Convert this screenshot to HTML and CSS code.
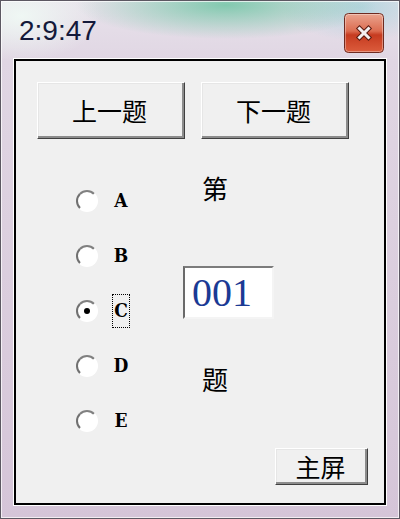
FILE: index.html
```html
<!DOCTYPE html>
<html>
<head>
<meta charset="utf-8">
<link rel="stylesheet" href="styles.css">
</head>
<body>
<div class="window">
  <div class="titlebar">
    <div class="title">2:9:47</div>
    <div class="close">
      <svg width="40" height="40" viewBox="0 0 40 40">
        <defs>
          <linearGradient id="cg" x1="0" y1="0" x2="0" y2="1">
            <stop offset="0" stop-color="#eaa590"/>
            <stop offset="0.45" stop-color="#dc6c50"/>
            <stop offset="0.55" stop-color="#c63b20"/>
            <stop offset="1" stop-color="#dc5d3d"/>
          </linearGradient>
        </defs>
        <rect x="0.5" y="0.5" width="39" height="39" rx="4" fill="url(#cg)" stroke="#6e2a20"/>
        <rect x="1.5" y="1.5" width="37" height="37" rx="3" fill="none" stroke="rgba(255,255,255,0.35)"/>
        <path d="M15.5 15.5 L24.5 24.5 M24.5 15.5 L15.5 24.5" stroke="#5a1a10" stroke-width="5" stroke-linecap="square"/>
        <path d="M15.5 15.5 L24.5 24.5 M24.5 15.5 L15.5 24.5" stroke="#f4f0f0" stroke-width="3" stroke-linecap="square"/>
      </svg>
    </div>
  </div>
  <div class="client">
    <div class="nav">
      <div class="btn nav-btn">上一题</div>
      <div class="btn nav-btn">下一题</div>
    </div>
    <div class="body">
      <div class="options">
        <div class="opt"><span class="radio"></span><span class="opt-label">A</span></div>
        <div class="opt"><span class="radio"></span><span class="opt-label">B</span></div>
        <div class="opt"><span class="radio checked"></span><span class="opt-label focus">C</span></div>
        <div class="opt"><span class="radio"></span><span class="opt-label">D</span></div>
        <div class="opt"><span class="radio"></span><span class="opt-label">E</span></div>
      </div>
      <div class="center">
        <div class="cn">第</div>
        <div class="numbox">001</div>
        <div class="cn cn-bottom">题</div>
      </div>
    </div>
    <div class="footer">
      <div class="btn home">主屏</div>
    </div>
  </div>
</div>
</body>
</html>
```
FILE: styles.css
```css
html, body {
  margin: 0;
  padding: 0;
}
body {
  width: 400px;
  height: 519px;
  overflow: hidden;
  background: #ffffff;
}
.window {
  box-sizing: border-box;
  width: 400px;
  height: 519px;
  border: 1px solid #5c5862;
  display: flex;
  flex-direction: column;
  box-shadow: inset 0 0 0 1px rgba(255, 255, 255, 0.7);
  background:
    radial-gradient(ellipse 150px 34px at 225px 4px, rgba(105, 195, 160, 0.8), rgba(105, 195, 160, 0)),
    radial-gradient(ellipse 80px 34px at 360px 6px, rgba(150, 205, 215, 0.6), rgba(150, 205, 215, 0)),
    radial-gradient(ellipse 80px 45px at 20px 15px, rgba(240, 250, 245, 0.9), rgba(240, 250, 245, 0)),
    linear-gradient(#e8e2eb, #e0d6e3 60px, #d5c5d8);
}
.titlebar {
  height: 58px;
  flex-shrink: 0;
  display: flex;
  justify-content: space-between;
  align-items: flex-start;
  padding: 0 15px 0 18px;
}
.title {
  margin-top: 14px;
  font: 28px/32px "Liberation Sans", Arial, sans-serif;
  color: #14193a;
}
.close {
  margin-top: 12px;
  width: 40px;
  height: 40px;
}
.close svg {
  display: block;
}
.client {
  margin: 0 13px 13px 13px;
  flex: 1;
  border: 2px solid #000;
  background: #f0f0f0;
  box-shadow: 0 0 0 1px #ffffff;
  display: flex;
  flex-direction: column;
}
.nav {
  display: flex;
  gap: 16px;
  padding: 21px 0 0 21px;
}
.btn {
  box-sizing: border-box;
  display: flex;
  align-items: center;
  justify-content: center;
  background: #f0f0f0;
  border: 1px solid;
  border-color: #ffffff #404040 #404040 #ffffff;
  box-shadow: inset -2px -2px 0 #8c8c8c, inset 1px 1px 0 #e6e6e6;
  font: 25px/1 "Noto Sans CJK SC", sans-serif;
  color: #000;
}
.nav-btn {
  width: 148px;
  height: 57px;
  padding-right: 3px;
}
.body {
  display: flex;
  margin-top: 34px;
  padding-left: 60px;
}
.options {
  display: flex;
  flex-direction: column;
  width: 54px;
}
.opt {
  height: 55px;
  display: flex;
  align-items: center;
}
.radio {
  box-sizing: border-box;
  width: 22px;
  height: 22px;
  border-radius: 50%;
  border: 2px solid;
  border-color: #808080 #ffffff #ffffff #707070;
  background: #ffffff;
  display: flex;
  align-items: center;
  justify-content: center;
  flex-shrink: 0;
}
.radio.checked::after {
  content: "";
  width: 6px;
  height: 6px;
  border-radius: 50%;
  background: #000;
}
.opt-label {
  box-sizing: border-box;
  width: 18px;
  height: 34px;
  margin-left: 14px;
  display: flex;
  align-items: center;
  justify-content: center;
  border: 1px dotted transparent;
  font: bold 19px/1 "DejaVu Serif", serif;
  font-stretch: condensed;
  color: #000;
}
.opt-label.focus {
  border-color: #000;
}
.center {
  display: flex;
  flex-direction: column;
  align-items: flex-start;
  margin-left: 53px;
}
.cn {
  font: 26px/30px "Noto Sans CJK SC", sans-serif;
  color: #000;
  padding-left: 19px;
}
.cn-bottom {
  margin-top: 45px;
}
.numbox {
  margin-top: 63px;
  box-sizing: border-box;
  width: 91px;
  height: 53px;
  background: #ffffff;
  border: 2px solid;
  border-color: #7c7c7c #f4f4f4 #f4f4f4 #6a6a6a;
  padding-left: 7px;
  display: flex;
  align-items: center;
  font: 40px/1 "Liberation Serif", serif;
  color: #1b3a94;
}
.footer {
  display: flex;
  justify-content: flex-end;
  padding-right: 16px;
}
.home {
  width: 93px;
  height: 37px;
  padding-right: 2px;
}
```
